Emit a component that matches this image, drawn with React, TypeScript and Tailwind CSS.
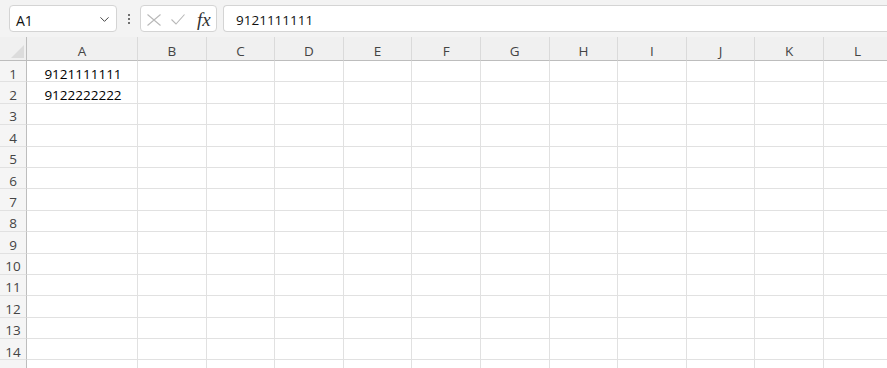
import { ChevronDown } from 'lucide-react';

const cols = ['A', 'B', 'C', 'D', 'E', 'F', 'G', 'H', 'I', 'J', 'K', 'L'];
const rows = Array.from({ length: 15 }, (_, i) => i + 1);
const data: Record<string, string> = { A1: '9121111111', A2: '9122222222' };

export default function App() {
  return (
    <div className="w-[887px] h-[368px] overflow-hidden bg-white font-['Open_Sans',sans-serif] text-[13px]">
      {/* Formula bar */}
      <div className="h-[37px] bg-[#f3f3f3] flex items-start pt-[5px] pl-[9px]">
        <div className="w-[108px] h-[27px] bg-white border border-[#d4d4d4] rounded-[4px] flex items-center justify-between pl-[6px] pr-[4px] pt-[3px]">
          <span className="text-[#111] text-[14px]">A1</span>
          <ChevronDown size={15} strokeWidth={1.6} className="text-[#444] -mt-[2px]" />
        </div>
        <div className="w-[23px] h-[27px] flex items-center justify-center">
          <div className="flex flex-col gap-[2px]">
            <span className="w-[2px] h-[2px] bg-[#444] rounded-full" />
            <span className="w-[2px] h-[2px] bg-[#444] rounded-full" />
            <span className="w-[2px] h-[2px] bg-[#444] rounded-full" />
          </div>
        </div>
        <div className="w-[77px] h-[27px] bg-white border border-[#d4d4d4] rounded-[4px] flex items-center pl-[6px]">
          <svg width="14" height="12" viewBox="0 0 14 12" className="mt-[2px]">
            <path d="M0.5 0.5 L13.5 11.5 M13.5 0.5 L0.5 11.5" stroke="#b8b8b8" strokeWidth="1.1" fill="none" />
          </svg>
          <svg width="14" height="11" viewBox="0 0 14 11" className="ml-[10px] mt-[2px]">
            <path d="M0.5 5.5 L5 10 L13.5 0.5" stroke="#b8b8b8" strokeWidth="1.1" fill="none" />
          </svg>
          <span className="font-['Liberation_Serif',serif] italic text-[19px] text-[#333] leading-none ml-[12px] mt-[2px]">fx</span>
        </div>
        <div className="flex-1 h-[27px] ml-[6px] bg-white border border-[#d4d4d4] border-r-0 rounded-l-[4px] flex items-center pl-[12px] pt-[3px]">
          <span className="text-[#111] text-[13.5px]">9121111111</span>
        </div>
      </div>

      {/* Grid */}
      <div className="grid grid-cols-[27px_111px_repeat(10,68.6px)_68px] grid-rows-[24px_repeat(15,21.4px)]">
        <div className="bg-[#f0f0f0] border-r border-b border-[#bdbdbd] flex items-end justify-end p-[2px]">
          <div className="w-0 h-0 border-l-[13px] border-l-transparent border-b-[13px] border-b-[#dcdcdc]" />
        </div>
        {cols.map(c => (
          <div
            key={c}
            className="bg-[#f0f0f0] border-r border-r-[#dadada] border-b border-b-[#bdbdbd] flex items-center justify-center pt-[6px] text-[#444] text-[13.5px]"
          >
            {c}
          </div>
        ))}
        {rows.map(r => (
          <div key={r} className="contents">
            <div className="bg-[#f5f5f5] border-r border-r-[#bdbdbd] border-b border-b-[#e1e1e1] flex items-center justify-center pt-[5px] text-[#444] text-[13.5px]">
              {r < 15 ? r : ''}
            </div>
            {cols.map(c => (
              <div
                key={c}
                className="border-r border-b border-[#e1e1e1] flex items-center justify-center pt-[5px] pl-[2px] text-black text-[13.5px] overflow-hidden"
              >
                {data[`${c}${r}`] ?? ''}
              </div>
            ))}
          </div>
        ))}
      </div>
    </div>
  );
}
